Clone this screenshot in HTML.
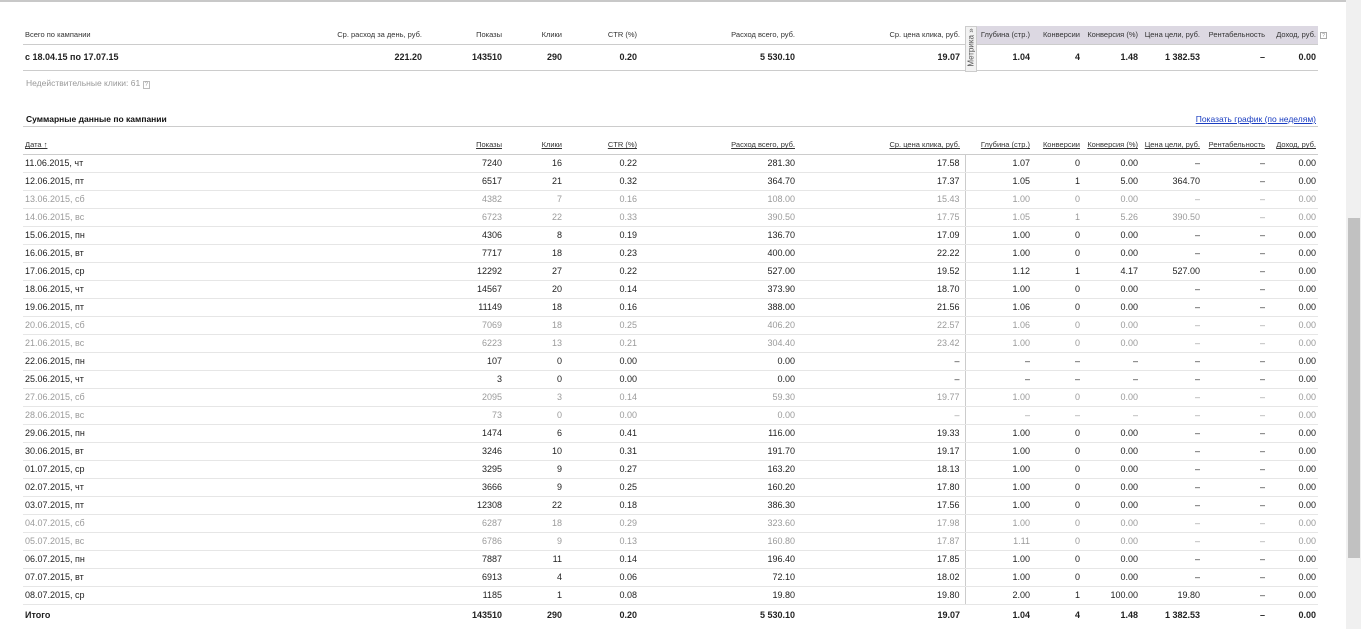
<!DOCTYPE html>
<html><head><meta charset="utf-8"><style>
*{margin:0;padding:0;box-sizing:border-box}
body{width:1361px;height:629px;overflow:hidden;background:#fff;font-family:"Liberation Sans",Arial,sans-serif;color:#222;position:relative}
.topline{position:absolute;left:0;top:0;width:1346px;height:2px;background:#c8c8c8}
.sb{position:absolute;left:1346px;top:0;width:15px;height:629px;background:#f0f0f0}
.thumb{position:absolute;left:1348px;top:218px;width:12px;height:340px;background:#c1c1c1}
table{position:absolute;left:23px;width:1295px;border-collapse:collapse;table-layout:fixed}
td{text-align:right;white-space:nowrap;overflow:visible;padding:0}
td:first-child{text-align:left;padding-left:2px}
td.c5{padding-right:5px}
td.c11{padding-right:2px}
.hd td{font-size:7.5px;color:#333;height:18px;border-bottom:1px solid #ccc}
.top{top:26px}
.top .val td{font-size:9px;font-weight:bold;height:26px;border-bottom:1px solid #ccc}
.top .hd td.m{background:#dcd8e2}
.bot{top:136px}
.bot .hd td{text-decoration:underline;color:#333}
.bot tr.r td{font-size:9px;height:18px;border-bottom:1px solid #e6e6e6}
.bot tr.r td.c6{border-left:1px solid #ccc}
.bot tr.g td{color:#9a9a9a}
.bot tr.t td{font-size:9px;font-weight:bold;height:22px}
.metr{position:absolute;left:965px;top:26px;width:12px;height:46px;background:#f2f2f2;border:1px solid #ccc;font-size:8px;color:#555}
.metr span{position:absolute;left:-15px;top:16px;transform:rotate(-90deg);width:40px;text-align:center;white-space:nowrap}
.q{position:absolute;left:1320px;top:32px;width:7px;height:7px;border:1px solid #aaa;font-size:5px;color:#888;text-align:center;line-height:6px}
.inv{position:absolute;left:26px;top:78px;font-size:8.5px;color:#999}
.h2{position:absolute;left:26px;top:114px;font-size:8.5px;color:#111;font-weight:600}
.lnk{position:absolute;right:45px;top:114px;font-size:8.5px;color:#1a3dc1;text-decoration:underline}
.h2line{position:absolute;left:23px;top:126px;width:1295px;height:1px;background:#ccc}
</style></head><body>
<div class="topline"></div>
<div class="sb"></div><div class="thumb"></div>
<table class="top">
<colgroup><col style="width:407px"><col style="width:72px"><col style="width:60px"><col style="width:75px"><col style="width:158px"><col style="width:170px"><col style="width:65px"><col style="width:50px"><col style="width:58px"><col style="width:62px"><col style="width:65px"><col style="width:53px"></colgroup>
<tr class="hd"><td>Всего по кампании<span style="float:right;padding-right:8px">Ср. расход за день, руб.</span></td><td>Показы</td><td>Клики</td><td>CTR (%)</td><td>Расход всего, руб.</td><td class="c5">Ср. цена клика, руб.</td><td class="m">Глубина (стр.)</td><td class="m">Конверсии</td><td class="m">Конверсия (%)</td><td class="m">Цена цели, руб.</td><td class="m">Рентабельность</td><td class="m c11">Доход, руб.</td></tr>
<tr class="val"><td>с 18.04.15 по 17.07.15<span style="float:right;padding-right:8px">221.20</span></td><td>143510</td><td>290</td><td>0.20</td><td>5 530.10</td><td class="c5">19.07</td><td>1.04</td><td>4</td><td>1.48</td><td>1 382.53</td><td>–</td><td class="c11">0.00</td></tr>
</table>
<div class="metr"><span>Метрика »</span></div>
<div class="q">?</div>
<div class="inv">Недействительные клики: 61 <span style="border:1px solid #bbb;font-size:6px;padding:0 1px">?</span></div>
<div class="h2">Суммарные данные по кампании</div>
<div class="lnk">Показать график (по неделям)</div>
<div class="h2line"></div>
<table class="bot">
<colgroup><col style="width:407px"><col style="width:72px"><col style="width:60px"><col style="width:75px"><col style="width:158px"><col style="width:170px"><col style="width:65px"><col style="width:50px"><col style="width:58px"><col style="width:62px"><col style="width:65px"><col style="width:53px"></colgroup>
<tr class="hd"><td>Дата ↑</td><td>Показы</td><td>Клики</td><td>CTR (%)</td><td>Расход всего, руб.</td><td class="c5">Ср. цена клика, руб.</td><td>Глубина (стр.)</td><td>Конверсии</td><td>Конверсия (%)</td><td>Цена цели, руб.</td><td>Рентабельность</td><td class="c11">Доход, руб.</td></tr>
<tr class="r"><td>11.06.2015, чт</td><td>7240</td><td>16</td><td>0.22</td><td>281.30</td><td class="c5">17.58</td><td class="c6">1.07</td><td>0</td><td>0.00</td><td>–</td><td>–</td><td class="c11">0.00</td></tr>
<tr class="r"><td>12.06.2015, пт</td><td>6517</td><td>21</td><td>0.32</td><td>364.70</td><td class="c5">17.37</td><td class="c6">1.05</td><td>1</td><td>5.00</td><td>364.70</td><td>–</td><td class="c11">0.00</td></tr>
<tr class="r g"><td>13.06.2015, сб</td><td>4382</td><td>7</td><td>0.16</td><td>108.00</td><td class="c5">15.43</td><td class="c6">1.00</td><td>0</td><td>0.00</td><td>–</td><td>–</td><td class="c11">0.00</td></tr>
<tr class="r g"><td>14.06.2015, вс</td><td>6723</td><td>22</td><td>0.33</td><td>390.50</td><td class="c5">17.75</td><td class="c6">1.05</td><td>1</td><td>5.26</td><td>390.50</td><td>–</td><td class="c11">0.00</td></tr>
<tr class="r"><td>15.06.2015, пн</td><td>4306</td><td>8</td><td>0.19</td><td>136.70</td><td class="c5">17.09</td><td class="c6">1.00</td><td>0</td><td>0.00</td><td>–</td><td>–</td><td class="c11">0.00</td></tr>
<tr class="r"><td>16.06.2015, вт</td><td>7717</td><td>18</td><td>0.23</td><td>400.00</td><td class="c5">22.22</td><td class="c6">1.00</td><td>0</td><td>0.00</td><td>–</td><td>–</td><td class="c11">0.00</td></tr>
<tr class="r"><td>17.06.2015, ср</td><td>12292</td><td>27</td><td>0.22</td><td>527.00</td><td class="c5">19.52</td><td class="c6">1.12</td><td>1</td><td>4.17</td><td>527.00</td><td>–</td><td class="c11">0.00</td></tr>
<tr class="r"><td>18.06.2015, чт</td><td>14567</td><td>20</td><td>0.14</td><td>373.90</td><td class="c5">18.70</td><td class="c6">1.00</td><td>0</td><td>0.00</td><td>–</td><td>–</td><td class="c11">0.00</td></tr>
<tr class="r"><td>19.06.2015, пт</td><td>11149</td><td>18</td><td>0.16</td><td>388.00</td><td class="c5">21.56</td><td class="c6">1.06</td><td>0</td><td>0.00</td><td>–</td><td>–</td><td class="c11">0.00</td></tr>
<tr class="r g"><td>20.06.2015, сб</td><td>7069</td><td>18</td><td>0.25</td><td>406.20</td><td class="c5">22.57</td><td class="c6">1.06</td><td>0</td><td>0.00</td><td>–</td><td>–</td><td class="c11">0.00</td></tr>
<tr class="r g"><td>21.06.2015, вс</td><td>6223</td><td>13</td><td>0.21</td><td>304.40</td><td class="c5">23.42</td><td class="c6">1.00</td><td>0</td><td>0.00</td><td>–</td><td>–</td><td class="c11">0.00</td></tr>
<tr class="r"><td>22.06.2015, пн</td><td>107</td><td>0</td><td>0.00</td><td>0.00</td><td class="c5">–</td><td class="c6">–</td><td>–</td><td>–</td><td>–</td><td>–</td><td class="c11">0.00</td></tr>
<tr class="r"><td>25.06.2015, чт</td><td>3</td><td>0</td><td>0.00</td><td>0.00</td><td class="c5">–</td><td class="c6">–</td><td>–</td><td>–</td><td>–</td><td>–</td><td class="c11">0.00</td></tr>
<tr class="r g"><td>27.06.2015, сб</td><td>2095</td><td>3</td><td>0.14</td><td>59.30</td><td class="c5">19.77</td><td class="c6">1.00</td><td>0</td><td>0.00</td><td>–</td><td>–</td><td class="c11">0.00</td></tr>
<tr class="r g"><td>28.06.2015, вс</td><td>73</td><td>0</td><td>0.00</td><td>0.00</td><td class="c5">–</td><td class="c6">–</td><td>–</td><td>–</td><td>–</td><td>–</td><td class="c11">0.00</td></tr>
<tr class="r"><td>29.06.2015, пн</td><td>1474</td><td>6</td><td>0.41</td><td>116.00</td><td class="c5">19.33</td><td class="c6">1.00</td><td>0</td><td>0.00</td><td>–</td><td>–</td><td class="c11">0.00</td></tr>
<tr class="r"><td>30.06.2015, вт</td><td>3246</td><td>10</td><td>0.31</td><td>191.70</td><td class="c5">19.17</td><td class="c6">1.00</td><td>0</td><td>0.00</td><td>–</td><td>–</td><td class="c11">0.00</td></tr>
<tr class="r"><td>01.07.2015, ср</td><td>3295</td><td>9</td><td>0.27</td><td>163.20</td><td class="c5">18.13</td><td class="c6">1.00</td><td>0</td><td>0.00</td><td>–</td><td>–</td><td class="c11">0.00</td></tr>
<tr class="r"><td>02.07.2015, чт</td><td>3666</td><td>9</td><td>0.25</td><td>160.20</td><td class="c5">17.80</td><td class="c6">1.00</td><td>0</td><td>0.00</td><td>–</td><td>–</td><td class="c11">0.00</td></tr>
<tr class="r"><td>03.07.2015, пт</td><td>12308</td><td>22</td><td>0.18</td><td>386.30</td><td class="c5">17.56</td><td class="c6">1.00</td><td>0</td><td>0.00</td><td>–</td><td>–</td><td class="c11">0.00</td></tr>
<tr class="r g"><td>04.07.2015, сб</td><td>6287</td><td>18</td><td>0.29</td><td>323.60</td><td class="c5">17.98</td><td class="c6">1.00</td><td>0</td><td>0.00</td><td>–</td><td>–</td><td class="c11">0.00</td></tr>
<tr class="r g"><td>05.07.2015, вс</td><td>6786</td><td>9</td><td>0.13</td><td>160.80</td><td class="c5">17.87</td><td class="c6">1.11</td><td>0</td><td>0.00</td><td>–</td><td>–</td><td class="c11">0.00</td></tr>
<tr class="r"><td>06.07.2015, пн</td><td>7887</td><td>11</td><td>0.14</td><td>196.40</td><td class="c5">17.85</td><td class="c6">1.00</td><td>0</td><td>0.00</td><td>–</td><td>–</td><td class="c11">0.00</td></tr>
<tr class="r"><td>07.07.2015, вт</td><td>6913</td><td>4</td><td>0.06</td><td>72.10</td><td class="c5">18.02</td><td class="c6">1.00</td><td>0</td><td>0.00</td><td>–</td><td>–</td><td class="c11">0.00</td></tr>
<tr class="r"><td>08.07.2015, ср</td><td>1185</td><td>1</td><td>0.08</td><td>19.80</td><td class="c5">19.80</td><td class="c6">2.00</td><td>1</td><td>100.00</td><td>19.80</td><td>–</td><td class="c11">0.00</td></tr>
<tr class="t"><td>Итого</td><td>143510</td><td>290</td><td>0.20</td><td>5 530.10</td><td class="c5">19.07</td><td>1.04</td><td>4</td><td>1.48</td><td>1 382.53</td><td>–</td><td class="c11">0.00</td></tr>
</table>
</body></html>
